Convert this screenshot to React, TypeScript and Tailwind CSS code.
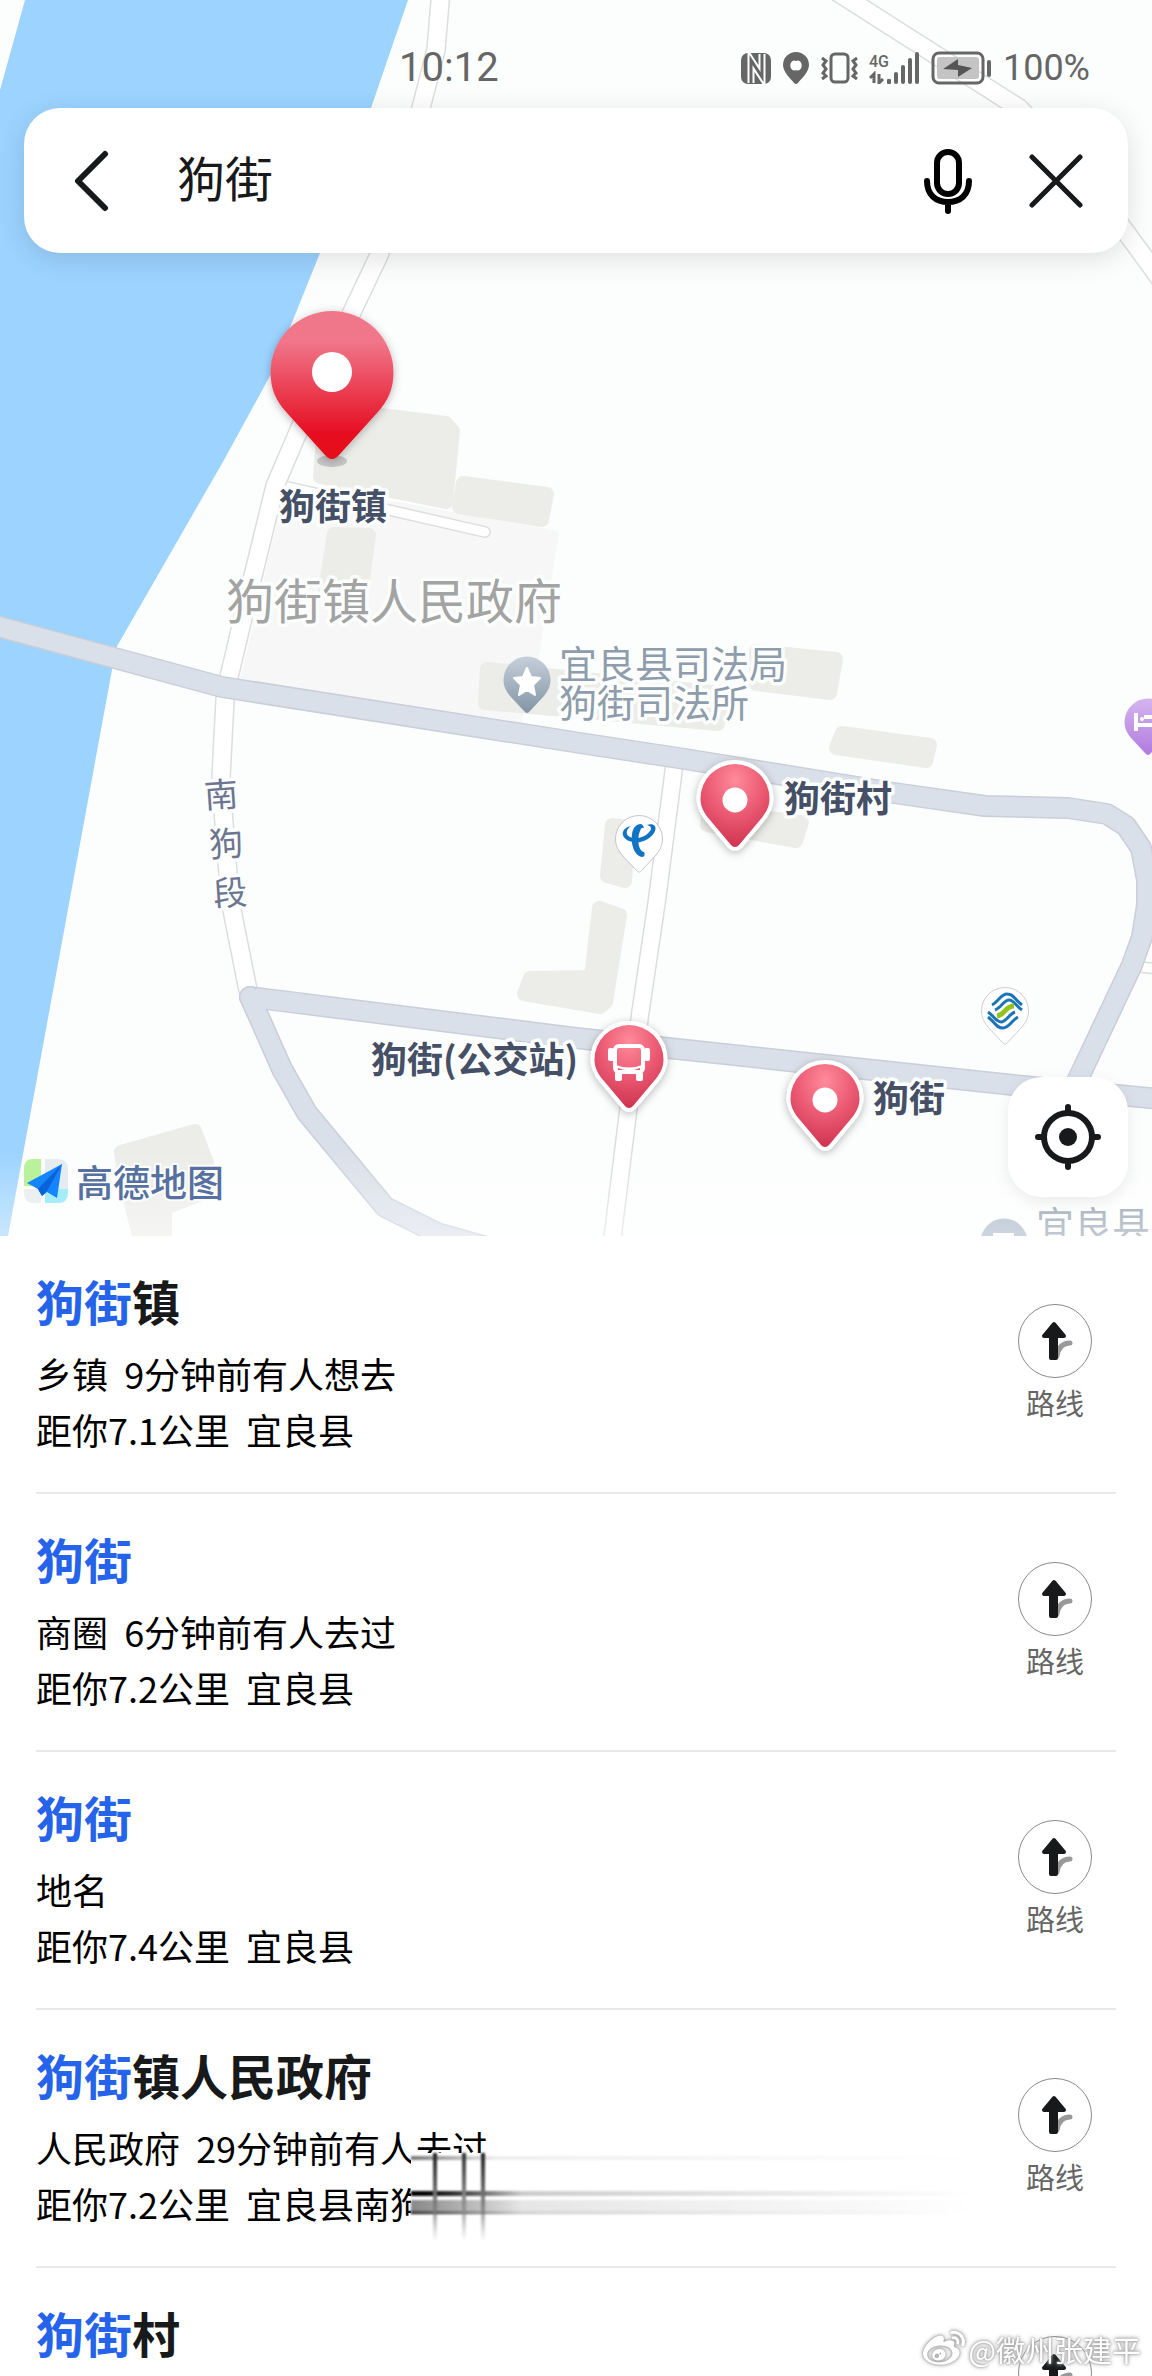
import React from "react";
import { FaWeibo } from "react-icons/fa";

const PIN_LARGE =
  "M0 0C-3 0-5-2-7-4L-45-46C-56-58-61.500-70-61.500-86.500A61.500 61.500 0 0 1 61.500-86.500C61.500-70 56-58 45-46L7-4C5-2 3 0 0 0Z";
const PIN =
  "M0 0C-1.500 0-3-1-4-2L-25-27C-31-34-34.500-40-34.500-48.500A34.500 34.500 0 0 1 34.500-48.500C34.500-40 31-34 25-27L4-2C3-1 1.500 0 0 0Z";
const PIN_SMALL =
  "M0 0C-1 0-2-1-3-2L-17-17C-21-22-23.500-27-23.500-33A23.500 23.500 0 0 1 23.500-33C23.500-27 21-22 17-17L3-2C2-1 1 0 0 0Z";

function Road({ d, width = 18, major = false }: { d: string; width?: number; major?: boolean }) {
  return (
    <g fill="none" strokeLinejoin="round" strokeLinecap="round">
      <path d={d} stroke={major ? "#c9ced9" : "#dcdddf"} strokeWidth={width + 2} />
      <path d={d} stroke={major ? "#dae0e9" : "#ffffff"} strokeWidth={width - 1} />
    </g>
  );
}

function ResultPin({ x, y, children }: { x: number; y: number; children?: React.ReactNode }) {
  return (
    <g transform={`translate(${x} ${y})`}>
      <g filter="url(#pinShadow)">
        <path d={PIN} fill="#fff" stroke="#fff" strokeWidth={8} strokeLinejoin="round" />
      </g>
      <path d={PIN} fill="url(#pinRed)" />
      {children ?? <circle cx={0} cy={-47} r={12.5} fill="#fff" />}
    </g>
  );
}

function MapCanvas() {
  return (
    <svg
      className="absolute inset-0 h-full w-full font-['Noto_Sans_CJK_SC',sans-serif]"
      viewBox="0 0 1152 1236"
      preserveAspectRatio="xMinYMin slice"
      role="img"
      aria-label="地图"
    >
      <defs>
        <linearGradient id="pinMain" x1="0" y1="0" x2="0" y2="1">
          <stop offset="0.2" stopColor="#f0778a" />
          <stop offset="0.85" stopColor="#e60a1e" />
        </linearGradient>
        <radialGradient id="pinRed" cx="0.5" cy="0.2" r="0.8">
          <stop offset="0" stopColor="#ff8a9a" />
          <stop offset="0.5" stopColor="#ec5c74" />
          <stop offset="1" stopColor="#cf3350" />
        </radialGradient>
        <linearGradient id="pinGrey" x1="0" y1="0" x2="0" y2="1">
          <stop offset="0" stopColor="#c6cfda" />
          <stop offset="1" stopColor="#8295a5" />
        </linearGradient>
        <linearGradient id="pinPurple" x1="0" y1="0" x2="0" y2="1">
          <stop offset="0" stopColor="#d5b4ee" />
          <stop offset="1" stopColor="#b07be0" />
        </linearGradient>
        <linearGradient id="fade" x1="0" y1="0" x2="0" y2="1">
          <stop offset="0" stopColor="#fff" stopOpacity="0" />
          <stop offset="1" stopColor="#fff" stopOpacity="0.45" />
        </linearGradient>
        <filter id="pinShadow" x="-30%" y="-30%" width="160%" height="160%">
          <feDropShadow dx="0" dy="2" stdDeviation="4" floodColor="#000" floodOpacity="0.28" />
        </filter>
      </defs>

      <rect width="1152" height="1236" fill="#fcfefd" />
      <path d="M25 0H408L371 108L320 253L297 310L270 376L224 460L116 648L8 1236H0V90Z" fill="#9cd3ff" />

      <path d="M288 484L557 533L538 650L520 720L243 677Z" fill="#f6f7f6" stroke="#f6f7f6" strokeWidth={4} strokeLinejoin="round" />
      <g fill="#ecede9" stroke="#ecede9" strokeWidth={14} strokeLinejoin="round">
        <path d="M325 408L390 416L446 423L453 431L446 502L320 477Z" />
        <path d="M463 483L547 494L542 520L459 507Z" />
        <path d="M334 534L369 535L361 593L325 590Z" />
        <path d="M487 669L723 693L718 724L485 703Z" />
        <path d="M756 651L836 659L830 693L756 684Z" />
        <path d="M842 733L930 745L926 761L836 748Z" />
        <path d="M709 811L802 822L796 841L707 825Z" />
        <path d="M612 825L629 827L625 881L607 876Z" />
        <path d="M599 908L620 915L606 1002L600 1007L524 994L530 978L591 977Z" />
        <path d="M121 1152L195 1131L207 1163L199 1195L165 1208V1243H141L125 1180Z" />
      </g>

      <Road width={10} d="M275 484L485 532" />
      <Road d="M441 -10L436 50L421 108L380 253L353 310L299 430L275 486L252 580L229 677L225 700L221 777L223 810L227 863L232 910L248 990" />
      <Road width={17} d="M675 760L657 900L640 1015L611 1250" />
      <Road width={18} d="M834 -10L1019 108L1080 170L1128 235L1180 306" />
      <Road width={10} d="M1130 966L1170 970" />
      <Road
        major
        width={20}
        d="M-20 621L0 627L222 687L580 743L685 759L894 793L985 806L1068 808L1107 814L1126 826L1141 848L1147 880V905L1142 937L1132 965L1072 1092"
      />
      <Road major width={20} d="M250 997L576 1038L668 1048L1013 1085L1170 1100" />
      <Road major width={20} d="M250 997L282 1069L307 1113L385 1207L437 1233L490 1248" />
      <path d="M255 998L300 1003" stroke="#dae0e9" strokeWidth={19} />
      <path d="M1066 1104L1084 1066" stroke="#dae0e9" strokeWidth={19} />

      {/* place labels */}
      <g strokeLinejoin="round" stroke="#fcfefd" strokeWidth={7} style={{ paintOrder: "stroke" }}>
        <g fill="#a3a3a3" fontSize={48} textAnchor="middle">
          <text x={394} y={619}>狗街镇人民政府</text>
        </g>
        <g fill="#8e9cab" fontSize={38}>
          <text x={559} y={678}>宜良县司法局</text>
          <text x={559} y={717}>狗街司法所</text>
          <text x={1036} y={1239}>宜良县</text>
        </g>
        <g fill="#6d7590" fontSize={34} textAnchor="middle">
          <text transform="rotate(-4 221 794)" x={221} y={807}>南</text>
          <text transform="rotate(-4 226 843)" x={226} y={856}>狗</text>
          <text transform="rotate(-4 230 892)" x={230} y={905}>段</text>
        </g>
        <g fill="#454f66" fontSize={36} fontWeight={700}>
          <text x={333} y={520} textAnchor="middle">狗街镇</text>
          <text x={784} y={812}>狗街村</text>
          <text x={371} y={1073}>狗街(公交站)</text>
          <text x={873} y={1112}>狗街</text>
        </g>
      </g>

      {/* town pin */}
      <ellipse cx={332} cy={461} rx={15} ry={6} fill="#c4c4c4" />
      <g transform="translate(332 459)">
        <g filter="url(#pinShadow)">
          <path d={PIN_LARGE} fill="url(#pinMain)" />
        </g>
        <ellipse cy={-87} rx={20} ry={20} fill="#fff" />
      </g>

      {/* government office */}
      <g transform="translate(527 713)">
        <path d={PIN_SMALL} fill="url(#pinGrey)" />
        <path
          d="M0-45L4-36L13-35L6-28L8-18L0-23L-8-18L-6-28L-13-35L-4-36Z"
          fill="#fff"
          stroke="#fff"
          strokeWidth={2}
          strokeLinejoin="round"
        />
      </g>

      {/* telecom shop */}
      <g transform="translate(639 872)">
        <path d={PIN_SMALL} fill="#fff" stroke="#c9c4cc" />
        <g fill="#1273c4">
          <path d="M-8-46C-18-44-19-35-10-31C0-27 12-32 16-41C18-46 14-49 8-47C12-46 13-44 11-41C7-35-3-32-9-35C-14-37-13-43-8-46Z" />
          <path d="M5-44C4-50-3-49-6-42C-9-34-7-17 3-15C6-15 6-18 5-20C-1-21-2-34 1-41C2-44 3-45 5-44Z" />
        </g>
      </g>

      {/* mobile shop */}
      <g transform="translate(1005 1044)">
        <path d={PIN_SMALL} fill="#fff" stroke="#d3cccc" />
        <g fill="none" strokeWidth={3} transform="translate(0 -33)">
          <path d="M-13-6C-7-9-4-17 2-17C9-17 9-12 17-6" stroke="#1b74b8" />
          <path d="M-10-1C-4-3-1-11 4-11C9-11 11-5 17-1" stroke="#1b74b8" />
          <path d="M13 6C7 9 4 17-2 17C-9 17-9 12-17 6" stroke="#1b74b8" />
          <path d="M10 1C4 3 1 11-4 11C-9 11-11 5-17 1" stroke="#1b74b8" />
          <path d="M-8 5C0 4 0-5 9-5" stroke="#8fc31f" strokeWidth={5} />
        </g>
      </g>

      {/* hotel */}
      <g transform="translate(1148 755)">
        <path d={PIN_SMALL} fill="url(#pinPurple)" />
        <path d="M-12-42V-24M-12-30H8M-4-38H8V-32" fill="none" stroke="#fff" strokeWidth={4} />
        <circle cx={-6} cy={-36} r={2} fill="#fff" />
      </g>

      {/* public office cut by the lower edge */}
      <g transform="translate(1004 1275)">
        <path d={PIN_SMALL} fill="#a5b5c6" />
        <path d="M-11-42H10V-30H-11Z" fill="#fff" />
      </g>

      <ResultPin x={735} y={847} />
      <ResultPin x={825} y={1147} />
      <ResultPin x={629} y={1108}>
        <g transform="translate(0 -46)">
          <rect x={-14} y={-16} width={28} height={26} rx={4} fill="none" stroke="#fff" strokeWidth={4} />
          <path d="M-13 3Q0 8 13 3V12H-13Z" fill="#fff" />
          <rect x={-21} y={-14} width={6} height={13} rx={2} fill="#fff" />
          <rect x={15} y={-14} width={6} height={13} rx={2} fill="#fff" />
          <rect x={-14} y={10} width={7} height={9} rx={2} fill="#fff" />
          <rect x={7} y={10} width={7} height={9} rx={2} fill="#fff" />
          <path d="M-11 6L-5 8H-11ZM11 6L5 8H11Z" fill="#e35470" />
        </g>
      </ResultPin>

      <rect y={1150} width="1152" height={86} fill="url(#fade)" />
    </svg>
  );
}

function StatusBar() {
  return (
    <div className="flex h-[108px] items-center justify-between pt-[28px] pr-[62px] pl-[399px] font-[Roboto,sans-serif] text-[#666]">
      <time className="text-[40px] leading-none">10:12</time>
      <div className="flex items-center gap-[12px]">
        <svg width="30" height="31" viewBox="0 0 30 31" fill="none" aria-label="NFC">
          <rect width="30" height="31" rx="7" fill="#666" />
          <path d="M10 30V7L21 24V1" stroke="#fcfefd" strokeWidth="7" />
          <path d="M10 30V7L21 24V1" stroke="#666" strokeWidth="3" />
        </svg>
        <svg width="26" height="32" viewBox="0 0 26 32" aria-label="定位">
          <path fill="#666" fillRule="evenodd" d="M13 0A13 13 0 0 1 26 13C26 20 18 27 15 31Q13 33 11 31C8 27 0 20 0 13A13 13 0 0 1 13 0ZM13 9A4 5 0 1 0 13 18A4 5 0 1 0 13 9Z" />
        </svg>
        <svg width="38" height="32" viewBox="0 0 38 32" fill="none" stroke="#666" aria-label="振动">
          <rect x="10" y="2" width="17" height="28" rx="4" strokeWidth="3" />
          <path d="M1 6L5 9L2 13L5 17L2 21L5 24L1 27M36 6L32 9L35 13L32 17L35 21L32 24L36 27" strokeWidth="3" />
        </svg>
        <div className="-ml-[2px] flex items-end">
          <div className="flex w-[18px] flex-col">
            <span className="text-[16px] leading-[18px] font-medium">4G</span>
            <svg width="18" height="13" viewBox="0 0 18 13" fill="none" stroke="#666" strokeWidth="3">
              <path d="M1 7L5 3V12M10 3V12L14 8" />
            </svg>
          </div>
          <svg width="32" height="32" viewBox="0 0 32 32" fill="#666" aria-label="信号">
            <rect x="0" y="27" width="4" height="5" rx="1" />
            <rect x="7" y="20" width="4" height="12" rx="2" />
            <rect x="14" y="13" width="4" height="19" rx="2" />
            <rect x="21" y="6" width="4" height="26" rx="2" />
            <rect x="28" y="0" width="4" height="32" rx="2" />
          </svg>
        </div>
        <svg width="60" height="34" viewBox="0 -1 60 34" aria-label="充电中">
          <rect x="2" y="1" width="50" height="30" rx="6" fill="none" stroke="#666" strokeWidth="3" />
          <rect x="6" y="5" width="42" height="22" rx="3" fill="#c4c4c4" />
          <path d="M12 17L27 7V13L41 16L27 25V18Z" fill="#555" />
          <rect x="56" y="8" width="4" height="17" rx="2" fill="#666" />
        </svg>
        <span className="text-[36px] leading-none">100%</span>
      </div>
    </div>
  );
}

function SearchBar() {
  return (
    <form
      className="mx-6 flex h-[145px] items-center rounded-[36px] bg-white pr-[36px] pl-[40px] shadow-[0_6px_28px_rgba(0,0,0,0.12)]"
      onSubmit={(e) => e.preventDefault()}
    >
      <button type="button" aria-label="返回" className="flex h-[72px] w-[56px] items-center justify-center">
        <svg width="36" height="62" viewBox="0 0 36 62" fill="none" stroke="#18191b" strokeWidth="6" strokeLinecap="round" strokeLinejoin="round">
          <path d="M31 4L4 31L31 58" />
        </svg>
      </button>
      <input
        type="text"
        aria-label="搜索地点"
        defaultValue="狗街"
        className="ml-[57px] h-[72px] min-w-0 flex-1 bg-transparent pb-[10px] text-[48px] leading-[62px] text-[#18191b] outline-none"
      />
      <button type="button" aria-label="语音搜索" className="flex h-[72px] w-[72px] items-center justify-center">
        <svg width="50" height="66" viewBox="0 0 50 66" fill="none" stroke="#000" strokeWidth="6" strokeLinecap="round">
          <rect x="14" y="4" width="22" height="42" rx="11" />
          <path d="M4 33C4 47 13 54 25 54S46 47 46 33M25 54V63" />
        </svg>
      </button>
      <button type="button" aria-label="清除" className="ml-[36px] flex h-[72px] w-[72px] items-center justify-center">
        <svg width="54" height="54" viewBox="0 0 54 54" fill="none" stroke="#18191b" strokeWidth="5" strokeLinecap="round">
          <path d="M3 3L51 51M51 3L3 51" />
        </svg>
      </button>
    </form>
  );
}

function MapBrand() {
  return (
    <div className="flex items-center gap-[8px]">
      <svg width="44" height="44" viewBox="0 0 44 44" aria-hidden="true">
        <path d="M8 0H17V27H0V10Q0 0 8 0Z" fill="#b9f29a" />
        <path d="M21 0H34Q44 0 44 10V30H21Z" fill="#e4ecef" />
        <path d="M0 30H17V44H10Q0 44 0 34Z" fill="#edf0f0" />
        <path d="M21 30H44V34Q44 44 34 44H21Z" fill="#a5ecff" />
        <path d="M38 5L3 24L14 30L18 37L23 33L33 39Z" fill="#1484ff" />
        <path d="M38 5L14 30L18 37L23 32Z" fill="#0862d8" />
      </svg>
      <span className="text-[37px] leading-[44px] font-medium text-[#56709f] [paint-order:stroke] [-webkit-text-stroke:4px_#fcfefd]">
        高德地图
      </span>
    </div>
  );
}

function RouteButton() {
  return (
    <button type="button" className="mt-[68px] flex w-[122px] shrink-0 flex-col items-center self-start">
      <span className="flex size-[74px] items-center justify-center rounded-full border border-[#8a8a8a]">
        <svg width="74" height="74" viewBox="0 0 74 74" className="shrink-0" aria-hidden="true">
          <path d="M39 52Q41 39 52 39" fill="none" stroke="#999" strokeWidth="5" strokeLinecap="round" />
          <path
            d="M36 20L46 32H38V54H33V32H26Z"
            fill="#18191b"
            stroke="#18191b"
            strokeWidth="4"
            strokeLinejoin="round"
          />
        </svg>
      </span>
      <span className="mt-[2px] text-[29px] leading-[44px] text-[#666]">路线</span>
    </button>
  );
}

type Place = { match: string; rest?: string; kind?: string; where?: string; smeared?: boolean };

const places: Place[] = [
  { match: "狗街", rest: "镇", kind: "乡镇  9分钟前有人想去", where: "距你7.1公里  宜良县" },
  { match: "狗街", kind: "商圈  6分钟前有人去过", where: "距你7.2公里  宜良县" },
  { match: "狗街", kind: "地名", where: "距你7.4公里  宜良县" },
  {
    match: "狗街",
    rest: "镇人民政府",
    kind: "人民政府  29分钟前有人去过",
    where: "距你7.2公里  宜良县南狗",
    smeared: true,
  },
  { match: "狗街", rest: "村" },
];

/** Brushed-out patch that hides the end of an address. */
function Smear() {
  return (
    <div aria-hidden="true" className="absolute top-[143px] left-[375px] h-[88px] w-[558px] bg-white">
      <div className="absolute top-[3px] h-[4px] w-full bg-linear-to-r from-[#777] via-[#eee] via-15% to-white blur-[1px]" />
      <div className="absolute top-[38px] h-[5px] w-full bg-linear-to-r from-black via-[#ccc] via-20% to-white blur-[1px]" />
      <div className="absolute top-[47px] h-[14px] w-full bg-linear-to-r from-[#888] via-[#e6e6e6] via-20% to-white blur-[1px]" />
      <div className="absolute top-[58px] h-[3px] w-full bg-linear-to-r from-[#444] via-[#d4d4d4] via-20% to-white blur-[1px]" />
      <div className="absolute left-[22px] h-full w-[4px] bg-linear-to-b from-[#222] via-[#777] to-transparent blur-[1px]" />
      <div className="absolute left-[51px] h-full w-[4px] bg-linear-to-b from-[#333] via-[#888] to-transparent blur-[1px]" />
      <div className="absolute left-[70px] h-full w-[4px] bg-linear-to-b from-[#222] via-[#777] to-transparent blur-[1px]" />
    </div>
  );
}

function PlaceRow({ place }: { place: Place }) {
  return (
    <li className="relative flex border-b-2 border-[#e8e8e8]">
      <div className="min-w-0 flex-1 pt-[28px] pb-[34px]">
        <h2 className="text-[48px] leading-[72px] font-bold text-[#18191b]">
          <span className="text-[#2563eb]">{place.match}</span>
          {place.rest}
        </h2>
        {place.kind && (
          <div className="mt-[9px] mb-px text-[36px] leading-[56px] whitespace-pre text-black">
            <p>{place.kind}</p>
            <p>{place.where}</p>
          </div>
        )}
      </div>
      {place.smeared && <Smear />}
      <RouteButton />
    </li>
  );
}

export default function App() {
  return (
    <div className="relative flex h-screen flex-col overflow-hidden bg-white font-['Noto_Sans_CJK_SC',sans-serif]">
      <section className="relative flex h-[1236px] shrink-0 flex-col justify-between overflow-hidden">
        <MapCanvas />
        <header className="relative">
          <StatusBar />
          <SearchBar />
        </header>
        <div className="relative flex items-end justify-between px-6 pb-[33px]">
          <MapBrand />
          <button
            type="button"
            aria-label="我的位置"
            className="mb-[6px] flex size-[120px] items-center justify-center rounded-[34px] bg-white shadow-[0_4px_16px_rgba(0,0,0,0.08)]"
          >
            <svg width="66" height="66" viewBox="0 0 66 66" fill="none" stroke="#18191b" strokeWidth="6" strokeLinecap="round">
              <circle cx="33" cy="33" r="24" />
              <path d="M33 9V3M33 57V63M9 33H3M57 33H63" />
              <circle cx="33" cy="33" r="9" fill="#18191b" stroke="none" />
            </svg>
          </button>
        </div>
      </section>

      <ul className="min-h-0 flex-1 overflow-hidden px-[36px]">
        {places.map((place, i) => (
          <PlaceRow key={i} place={place} />
        ))}
      </ul>

      <div className="absolute right-[11px] bottom-[6px] flex items-center gap-[4px] text-white [filter:drop-shadow(0_0_1px_#999)_drop-shadow(0_0_2px_#aaa)]">
        <FaWeibo className="size-[42px]" />
        <span className="text-[29px] leading-[40px]">@徽州张建平</span>
      </div>
    </div>
  );
}
